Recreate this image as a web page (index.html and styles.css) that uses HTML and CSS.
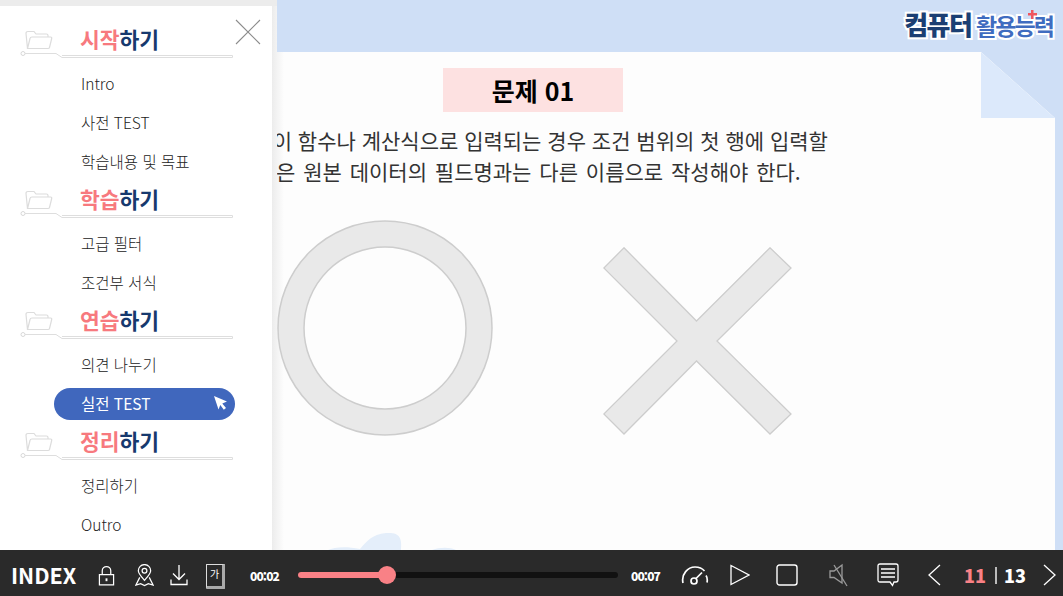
FILE: index.html
```html
<!DOCTYPE html>
<html lang="ko">
<head>
<meta charset="utf-8">
<title>컴퓨터 활용능력</title>
<link rel="stylesheet" href="styles.css">
</head>
<body>
<svg class="sprite" aria-hidden="true">
  <symbol id="folder" viewBox="0 0 28 20">
    <path d="M2.500 18.500 1 3.500Q1 1.500 3 1.500H9L11 4H21.500Q23 4 23 5.500V7M2.500 18.500 5 8.500Q5.300 7 7 7H25.500Q27 7 26.700 8.500L24.500 17.500Q24.200 18.500 23 18.500Z" fill="#fff" stroke="#dcdcdc" stroke-width="1.200"/>
  </symbol>
  <symbol id="rule" viewBox="0 0 216 8">
    <circle cx="3" cy="2.500" r="2" fill="#fff" stroke="#d8d8d8"/>
    <path d="M5 2.500H36L42 6.500H212.500V4.500H42" fill="none" stroke="#dedede"/>
  </symbol>
</svg>
<div class="stage">
  <header class="top">
    <div class="logo"><span class="logo-a">컴퓨터</span> <span class="logo-b">활용능력</span></div>
  </header>
  <main class="sheet">
    <div class="fold"></div>
    <h1 class="qtitle">문제 01</h1>
    <p class="qtext"><span class="line-a">조건이 함수나 계산식으로 입력되는 경우 조건 범위의 첫 행에 입력할</span><span class="line-b">필드명은 원본 데이터의 필드명과는 다른 이름으로 작성해야 한다.</span></p>
    <div class="answers">
      <svg class="ans-o" viewBox="0 0 216 216"><circle cx="108" cy="108" r="107" fill="#e9e9e9" stroke="#cdcdcd" stroke-width="1.500"/><circle cx="108" cy="108" r="81" fill="#fdfdfd" stroke="#cdcdcd" stroke-width="1.500"/></svg>
      <svg class="ans-x" viewBox="0 0 189 188"><path d="M21 .8 93.500 74 167 .8 188 21 114 94 188 167 167 187 93.500 114 21 187 .8 167 74 94 .8 21Z" fill="#e9e9e9" stroke="#cdcdcd" stroke-width="1.300"/></svg>
    </div>
    <svg class="water" viewBox="0 0 140 18"><path d="M0 18C6 15 18 14 32 17 38 10 44 2 58 1 72 0 74 6 73 18ZM104 18C112 15 122 15 128 18Z" fill="#e4eefa"/></svg>
  </main>
  <aside class="menu">
    <button class="close" aria-label="닫기"><svg viewBox="0 0 26 26"><path d="M1 1 25 25M25 1 1 25" stroke="#8c8c8c" stroke-width="1.100" fill="none"/></svg></button>
    <section class="group">
      <svg class="folder"><use href="#folder"/></svg><svg class="rule"><use href="#rule"/></svg>
      <h2 class="ghead"><em>시작</em>하기</h2>
      <a class="item">Intro</a><a class="item">사전 TEST</a><a class="item">학습내용 및 목표</a>
    </section>
    <section class="group">
      <svg class="folder"><use href="#folder"/></svg><svg class="rule"><use href="#rule"/></svg>
      <h2 class="ghead"><em>학습</em>하기</h2>
      <a class="item">고급 필터</a><a class="item">조건부 서식</a>
    </section>
    <section class="group">
      <svg class="folder"><use href="#folder"/></svg><svg class="rule"><use href="#rule"/></svg>
      <h2 class="ghead"><em>연습</em>하기</h2>
      <a class="item">의견 나누기</a>
      <a class="item active">실전 TEST<svg class="cursor" viewBox="0 0 14 14"><path d="M0 0 13 5.500 8.300 7.400 12 12 9.800 13.800 6.300 9 4.500 13.500Z" fill="#fff"/></svg></a>
    </section>
    <section class="group">
      <svg class="folder"><use href="#folder"/></svg><svg class="rule"><use href="#rule"/></svg>
      <h2 class="ghead"><em>정리</em>하기</h2>
      <a class="item">정리하기</a><a class="item">Outro</a>
    </section>
  </aside>
  <footer class="bar">
    <span class="index">INDEX</span>
    <svg class="ico i-lock" viewBox="0 0 18 22"><path d="M1.500 10H16.500V21H1.500ZM4.500 10V6A4.500 4.500 0 0 1 13.500 6V10" fill="none" stroke="#fff" stroke-width="1.300"/><rect x="8" y="14" width="2" height="3" fill="#fff"/></svg>
    <svg class="ico i-map" viewBox="0 0 20 24"><path d="M10 17C6 12.500 3.500 10 3.500 7A6.500 6.500 0 0 1 16.500 7C16.500 10 14 12.500 10 17Z" fill="none" stroke="#fff" stroke-width="1.300"/><circle cx="10" cy="7" r="2.500" fill="none" stroke="#fff" stroke-width="1.300"/><path d="M5 14 1 22 6 20.500 10 22.500 14 20.500 19 22 15 14" fill="none" stroke="#fff" stroke-width="1.300"/></svg>
    <svg class="ico i-down" viewBox="0 0 18 22"><path d="M9 1V15M3 9.500 9 15.500 15 9.500M1 15.500V20.500H17V15.500" fill="none" stroke="#fff" stroke-width="1.300"/></svg>
    <span class="book">가</span>
    <span class="time t-now">00:02</span>
    <div class="track"><div class="fill"></div><div class="thumb"></div></div>
    <span class="time t-end">00:07</span>
    <svg class="ico i-gauge" viewBox="0 0 28 20"><path d="M2 18C0 9 7 2 14 2 17 2 21 3 23.500 6M26 17.500C26.500 15 26 12 25 10.500" fill="none" stroke="#fff" stroke-width="1.700"/><path d="M14.500 14 21 7.500" stroke="#fff" stroke-width="1.700"/><circle cx="13" cy="16" r="3" fill="none" stroke="#fff" stroke-width="1.700"/></svg>
    <svg class="ico i-play" viewBox="0 0 20 22"><path d="M1 1.500 19 11 1 20.500Z" fill="none" stroke="#fff" stroke-width="1.300"/></svg>
    <svg class="ico i-stop" viewBox="0 0 22 22"><rect x="1" y="1" width="20" height="20" rx="2.500" fill="none" stroke="#fff" stroke-width="1.400"/></svg>
    <svg class="ico i-mute" viewBox="0 0 20 24"><path d="M1 8H5L13 2V20L5 14.500H1Z" fill="none" stroke="#9a9a9a" stroke-width="1.300"/><path d="M5 2 18 23" stroke="#9a9a9a" stroke-width="1.300"/></svg>
    <svg class="ico i-note" viewBox="0 0 22 24"><path d="M3 1H19Q21 1 21 3V17Q21 19 19 19H17L15.500 22.500 13 19H3Q1 19 1 17V3Q1 1 3 1Z" fill="none" stroke="#fff" stroke-width="1.300"/><path d="M4 6H18M4 10H18M4 14H18" stroke="#fff" stroke-width="1.300"/></svg>
    <svg class="ico i-prev" viewBox="0 0 14 22"><path d="M13 1 2 11 13 21" fill="none" stroke="#fff" stroke-width="1.300"/></svg>
    <div class="pager"><b class="cur">11</b><i class="sep"></i><b class="tot">13</b></div>
    <svg class="ico i-next" viewBox="0 0 14 22"><path d="M1 1 12 11 1 21" fill="none" stroke="#fff" stroke-width="1.300"/></svg>
  </footer>
</div>
</body>
</html>
```

FILE: styles.css
```css
* { box-sizing: border-box; }
html, body { margin: 0; padding: 0; }
body { font-family: "Noto Sans CJK KR", "Noto Sans", sans-serif; overflow: hidden; }
.sprite { width: 0; height: 0; position: absolute; }
.stage { position: relative; width: 1063px; height: 596px; display: flex; flex-direction: column; overflow: hidden; background: #cfdff6; }
.top { height: 52px; flex: none; display: flex; justify-content: flex-end; padding: 4px 10px 0 0; }
.logo { font-weight: 900; line-height: 40px; white-space: nowrap; }
.logo span { -webkit-text-stroke: 4px #fff; paint-order: stroke fill; }
.logo-a { font-size: 26px; color: #1b3f73; letter-spacing: -1.500px; }
.logo-b { position: relative; font-size: 23px; font-weight: 700; color: #3f6cc0; letter-spacing: -1.900px; }
.logo-b::after { content: ""; position: absolute; left: 52px; top: 2px; width: 9px; height: 9px; background: linear-gradient(#f0555f, #f0555f) center / 9px 2.500px no-repeat, linear-gradient(#f0555f, #f0555f) center / 2.500px 9px no-repeat; }
.sheet { position: relative; flex: 1; min-height: 0; margin-right: 8px; background: linear-gradient(to right, #f3f3f3 277px, #fdfdfd 284px); display: flex; flex-direction: column; clip-path: polygon(0 0, 981px 0, 1055px 66px, 100% 100%, 0 100%); }
.fold { position: absolute; top: 0; right: 0; width: 74px; height: 66px; background: #dce9fb; clip-path: polygon(0 0, 100% 100%, 0 100%); }
.qtitle { margin: 16px 0 0 443px; width: 180px; height: 44px; background: #fde1e1; color: #000; font-size: 25px; font-weight: 700; line-height: 44px; text-align: center; }
.qtext { margin: 13px 0 0 234px; font-size: 21px; font-weight: 400; line-height: 31px; color: #333; }
.qtext span { display: block; white-space: nowrap; }
.line-b { margin-left: -16px; word-spacing: 2px; }
.answers { display: flex; align-items: flex-start; margin: 33px 0 0 277px; }
.ans-o { width: 216px; height: 216px; }
.ans-x { width: 189px; height: 188px; margin: 27px 0 0 110px; }
.water { position: absolute; left: 328px; bottom: 0; width: 140px; height: 18px; }
.menu { position: absolute; top: 0; left: 0; bottom: 46px; width: 277px; padding: 14px 5px 0 0; background: linear-gradient(to right, #fff 272px, #ececec 272px, #f3f3f3 277px); border-top: 6px solid #ececec; }
.close { position: absolute; top: 13px; left: 235px; width: 26px; height: 26px; padding: 0; border: 0; background: none; }
.close svg { display: block; width: 26px; height: 26px; }
.group { position: relative; padding-top: 43px; }
.folder { position: absolute; top: 10px; left: 25px; width: 28px; height: 20px; }
.rule { position: absolute; top: 31px; left: 20px; width: 216px; height: 8px; }
.ghead { position: absolute; top: 3px; left: 80px; margin: 0; font-size: 21.500px; font-weight: 700; line-height: 32px; color: #17396e; white-space: nowrap; }
.ghead em { font-style: normal; color: #f7797e; }
.item { display: flex; align-items: center; position: relative; height: 39px; padding-left: 81px; font-size: 15.500px; font-weight: 300; color: #222; }
.item.active { color: #fff; font-weight: 400; isolation: isolate; }
.item.active::before { content: ""; position: absolute; z-index: -1; left: 54px; top: 5px; width: 181px; height: 32px; border-radius: 16px; background: #4067bd; }
.cursor { position: absolute; left: 214px; top: 13px; width: 14px; height: 14px; }
.bar { height: 46px; flex: none; display: flex; align-items: center; padding-top: 4px; background: #2a2a2a; color: #fff; position: relative; z-index: 2; }
.index { margin-left: 11px; width: 66px; font-size: 21.500px; font-weight: 700; line-height: 1; }
.ico { flex: none; display: block; }
.i-lock { width: 17px; height: 21px; margin-left: 21px; }
.i-map { width: 19px; height: 23px; margin-left: 20px; }
.i-down { width: 18px; height: 22px; margin-left: 16px; }
.book { flex: none; width: 19px; height: 25px; margin: 2px 0 0 18px; border: 1px solid #ddd; border-right: 3px solid #aaa; border-bottom: 3px solid #aaa; border-radius: 1px; font-size: 10px; line-height: 17px; text-align: center; }
.time { flex: none; margin-top: 2px; font-size: 12px; font-weight: 900; letter-spacing: -.9px; line-height: 1; }
.t-now { margin-left: 25px; width: 30px; }
.t-end { margin-left: 13px; width: 30px; }
.track { position: relative; flex: none; width: 320px; height: 6px; margin-left: 18px; border-radius: 3px; background: #111; }
.fill { width: 89px; height: 6px; border-radius: 3px; background: #f98186; }
.thumb { position: absolute; left: 80px; top: -6px; width: 18px; height: 18px; border-radius: 50%; background: #f98186; }
.i-gauge { width: 28px; height: 20px; margin-left: 20px; }
.i-play { width: 20px; height: 22px; margin-left: 21px; }
.i-stop { width: 22px; height: 22px; margin-left: 26px; }
.i-mute { width: 20px; height: 24px; margin-left: 31px; }
.i-note { width: 22px; height: 24px; margin-left: 28px; }
.i-prev { width: 14px; height: 22px; margin-left: 28px; }
.pager { flex: none; display: flex; align-items: center; margin-left: 23px; font-size: 18px; line-height: 1; }
.pager b { width: 22px; font-weight: 900; }
.cur { color: #f98186; }
.sep { width: 2px; height: 17px; margin: 0 7px 0 9px; background: #bbb; }
.i-next { width: 14px; height: 22px; margin-left: 17px; }
```
